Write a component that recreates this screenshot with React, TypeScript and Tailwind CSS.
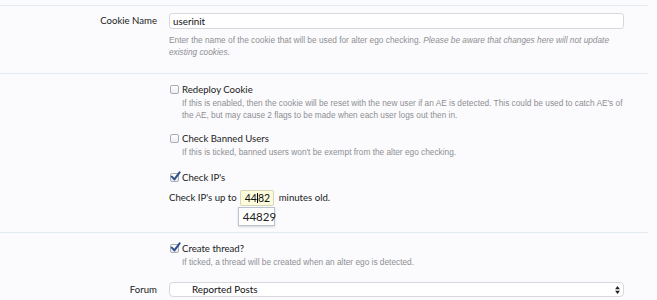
import React from "react";

const font = { fontFamily: '"Liberation Sans", Arial, sans-serif' };
const label = "font-['Lato','Liberation_Sans',Arial,sans-serif]";

function Box({ checked }: { checked?: boolean }) {
  return (
    <span className="relative inline-block w-[9px] h-[9px] shrink-0 rounded-[2px] border border-[#a9adb3] bg-gradient-to-b from-white to-[#eceef1] mr-[3px]">
      {checked && (
        <svg viewBox="0 0 12 12" className="absolute left-[-1px] top-[-3px] w-[11px] h-[11px]">
          <path d="M2 6.2 L4.8 9.2 L10.5 1.5" fill="none" stroke="#2d4f8a" strokeWidth="2.2" strokeLinecap="round" strokeLinejoin="round" />
        </svg>
      )}
    </span>
  );
}

function Check({ text, checked }: { text: string; checked?: boolean }) {
  return (
    <div className={`flex items-center h-[13px] text-[9.6px] leading-[13px] text-[#222] ${label}`}>
      <Box checked={checked} />
      <span>{text}</span>
    </div>
  );
}

function Help({ children, indent }: { children: React.ReactNode; indent?: boolean }) {
  return (
    <p className={`text-[8.3px] leading-[12px] text-[#8e8f93] ${indent ? "pl-[12px]" : ""}`}>{children}</p>
  );
}

export default function App() {
  return (
    <div className="w-[657px] h-[300px] overflow-hidden bg-[#fbfbfd]" style={font}>
      <div className="w-[648px]">
        <div className="h-[6px] border-b border-[#e1ebf1]" />

        {/* cookie name */}
        <div className="flex pt-[7px] pb-[15px] border-b border-[#e1ebf1]">
          <div className={`w-[157px] text-right text-[9.6px] leading-[16px] text-[#222] ${label}`}>Cookie Name</div>
          <div className="ml-[12px] w-[455px]">
            <div className={`h-[16px] rounded-[3px] border border-[#d6d8dc] bg-white pl-[3px] text-[9.8px] leading-[14px] text-[#111] ${label}`}>userinit</div>
            <div className="mt-[5px]">
              <Help>
                Enter the name of the cookie that will be used for alter ego checking.{" "}
                <i>Please be aware that changes here will not update existing cookies.</i>
              </Help>
            </div>
          </div>
        </div>

        {/* options */}
        <div className="flex pt-[9px] pb-[26px] border-b border-[#e1ebf1]">
          <div className="w-[157px]" />
          <div className="ml-[13px] w-[455px]">
            <Check text="Redeploy Cookie" />
            <div className="mt-[1px]">
              <Help indent>
                If this is enabled, then the cookie will be reset with the new user if an AE is detected. This could be used to catch AE's of the AE, but may cause 2 flags to be made when each user logs out then in.
              </Help>
            </div>
            <div className="mt-[11px]">
              <Check text="Check Banned Users" />
            </div>
            <div className="mt-[1px]">
              <Help indent>If this is ticked, banned users won't be exempt from the alter ego checking.</Help>
            </div>
            <div className="mt-[13px]">
              <Check text="Check IP's" checked />
            </div>
            <div className={`mt-[6px] -ml-[1px] flex items-center h-[16px] text-[9.6px] text-[#222] ${label}`}>
              <span>Check IP's up to</span>
              <span className="relative ml-[3px] w-[34px] h-[16px] rounded-[2px] border border-[#d9d6b8] bg-[#fcfbdc] pl-[4px] text-[10.5px] leading-[14px] text-[#111]">
                44<span className="inline-block w-px h-[10px] bg-black align-[-1px]" />82
                <span className="absolute left-[-3px] top-[16px] w-[37px] h-[19px] border border-[#b9c4cf] bg-white pl-[4px] text-[11.5px] leading-[17px] text-[#222] shadow-[0_1px_2px_rgba(0,0,0,0.15)]">
                  44829
                </span>
              </span>
              <span className="ml-[5px]">minutes old.</span>
            </div>
          </div>
        </div>

        {/* thread */}
        <div className="pt-[9px]">
          <div className="flex">
            <div className="w-[157px]" />
            <div className="ml-[13px] w-[455px]">
              <Check text="Create thread?" checked />
              <div className="mt-[1px]">
                <Help indent>If ticked, a thread will be created when an alter ego is detected.</Help>
              </div>
            </div>
          </div>
          <div className="flex mt-[14px]">
            <div className={`w-[157px] text-right text-[9.6px] leading-[15px] text-[#222] ${label}`}>Forum</div>
            <div className="ml-[12px] w-[455px]">
              <div className={`flex items-center justify-between h-[15px] rounded-[4px] border border-[#d6d8dc] bg-white pl-[22px] pr-[3px] text-[9.8px] text-[#111] ${label}`}>
                <span>Reported Posts</span>
                <svg viewBox="0 0 6 10" className="w-[5px] h-[8px]">
                  <path d="M3 0 L6 4 L0 4 Z M3 10 L6 6 L0 6 Z" fill="#222" />
                </svg>
              </div>
              <div className="mt-[2px]">
                <Help>Select the forum you would like to create alter ego threads in.</Help>
              </div>
            </div>
          </div>
        </div>
      </div>
    </div>
  );
}
